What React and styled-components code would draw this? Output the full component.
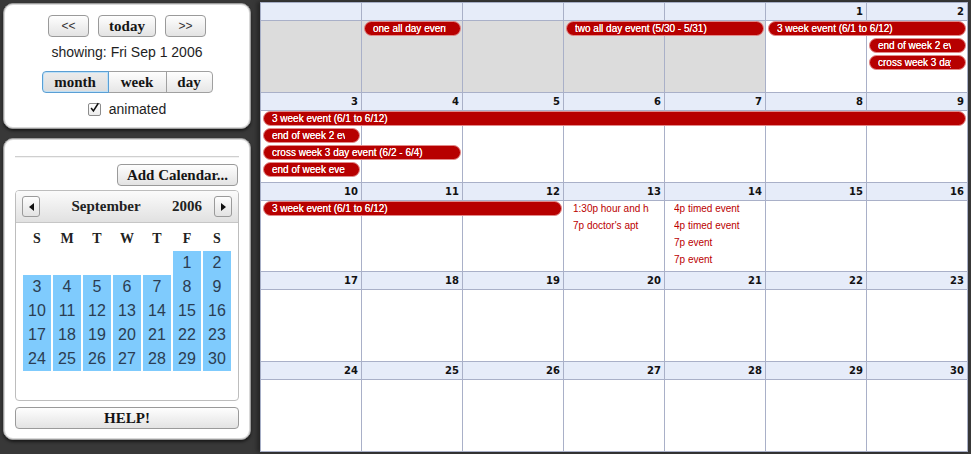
import styled, { createGlobalStyle } from "styled-components";

const GlobalStyle = createGlobalStyle`
  html, body {
    margin: 0;
    padding: 0;
  }
  body {
    background: #383838;
    font-family: "Liberation Sans", Arial, sans-serif;
  }
`;

const Page = styled.div`
  display: flex;
  gap: 9px;
  height: 454px;
  padding: 2px 3px;
  box-sizing: border-box;
`;

const Sidebar = styled.div`
  width: 248px;
  flex: none;
  display: flex;
  flex-direction: column;
  gap: 9px;
  padding-top: 1px;
`;

const Panel = styled.div`
  box-sizing: border-box;
  height: ${(p) => p.$height}px;
  background: #fff;
  border: 1px solid #9c9c9c;
  border-radius: 10px;
  box-shadow: inset 0 0 0 1px #d8d8d8, 0 2px 3px rgba(0, 0, 0, 0.55);
  display: flex;
  flex-direction: column;
`;

const ViewPanel = styled(Panel)`
  align-items: center;
  padding-top: 11px;
`;

const CalPanel = styled(Panel)`
  padding: 0 11px;
`;

const Button = styled.button`
  box-sizing: border-box;
  height: 22px;
  width: ${(p) => (p.$width ? `${p.$width}px` : "auto")};
  padding: 0;
  border: 1px solid #9a9a9a;
  border-radius: 4px;
  background: linear-gradient(#fefefe, #e3e3e3);
  font: bold 15px "Liberation Serif", "Times New Roman", serif;
  color: #151515;
  line-height: 20px;
`;

const ArrowText = styled(Button)`
  font: 12px "Liberation Sans", Arial, sans-serif;
  color: #333;
`;

const NavRow = styled.div`
  display: flex;
  gap: 9px;
`;

const Showing = styled.div`
  margin-top: 6px;
  font-size: 14px;
  line-height: 18px;
  color: #1e1e1e;
`;

const Switch = styled.div`
  display: flex;
  margin-top: 10px;
`;

const Segment = styled.button`
  box-sizing: border-box;
  height: 22px;
  width: ${(p) => p.$width}px;
  padding: 0;
  margin-left: -1px;
  border: 1px solid ${(p) => (p.$active ? "#5a9fd4" : "#a0a0a0")};
  position: relative;
  z-index: ${(p) => (p.$active ? 1 : 0)};
  border-radius: 0;
  background: ${(p) =>
    p.$active ? "linear-gradient(#ececec, #dcdcdc)" : "linear-gradient(#fefefe, #e6e6e6)"};
  box-shadow: ${(p) => (p.$active ? "inset 0 0 0 1px #bfe0f6" : "none")};
  font: bold 15px "Liberation Serif", "Times New Roman", serif;
  color: #151515;
  line-height: 20px;

  &:first-child {
    margin-left: 0;
    border-radius: 4px 0 0 4px;
  }
  &:last-child {
    border-radius: 0 4px 4px 0;
  }
`;

const CheckRow = styled.label`
  display: flex;
  align-items: center;
  gap: 8px;
  margin-top: 8px;
  font-size: 14px;
  line-height: 16px;
  color: #1e1e1e;
`;

const CheckBox = styled.span`
  box-sizing: border-box;
  width: 13px;
  height: 13px;
  border: 1px solid #8c8c8c;
  border-radius: 2px;
  background: linear-gradient(#fff, #ececec);
  display: flex;
  align-items: center;
  justify-content: center;
`;

const Divider = styled.div`
  margin-top: 17px;
  height: 1px;
  background: #cfcfcf;
  box-shadow: 0 1px 0 #f2f2f2;
`;

const AddRow = styled.div`
  display: flex;
  justify-content: flex-end;
  margin-top: 7px;
  padding-right: 1px;
`;

const MiniCal = styled.div`
  box-sizing: border-box;
  margin-top: 4px;
  height: 211px;
  border: 1px solid #bdbdbd;
  border-radius: 4px;
  overflow: hidden;
`;

const MiniHead = styled.div`
  display: flex;
  align-items: center;
  height: 32px;
  box-sizing: border-box;
  padding: 0 6px;
  background: linear-gradient(#fbfbfb, #e1e1e1);
  border-bottom: 1px solid #c6c6c6;
  font: bold 15px "Liberation Serif", "Times New Roman", serif;
  color: #222;
`;

const MonthName = styled.span`
  flex: 1;
  text-align: center;
`;

const YearName = styled.span`
  margin-right: 12px;
`;

const MiniArrow = styled.button`
  box-sizing: border-box;
  width: 18px;
  height: 21px;
  padding: 0;
  border: 1px solid #9a9a9a;
  border-radius: 3px;
  background: linear-gradient(#fefefe, #e2e2e2);
  display: flex;
  align-items: center;
  justify-content: center;
`;

const Triangle = styled.span`
  width: 0;
  height: 0;
  border-top: 4px solid transparent;
  border-bottom: 4px solid transparent;
  ${(p) => (p.$dir === "left" ? "border-right: 5px solid #111;" : "border-left: 5px solid #111;")}
`;

const MiniGrid = styled.div`
  display: grid;
  grid-template-columns: repeat(7, 28px);
  column-gap: 2px;
  padding: 0 7px;
`;

const DayNames = styled(MiniGrid)`
  margin-top: 8px;
  font: bold 14px "Liberation Serif", "Times New Roman", serif;
  line-height: 16px;
  color: #222;
  text-align: center;
`;

const MiniDays = styled(MiniGrid)`
  margin-top: 4px;
  grid-auto-rows: 24px;
`;

const MiniDay = styled.div`
  background: ${(p) => (p.$empty ? "transparent" : "#7fcbfd")};
  font-size: 16px;
  line-height: 24px;
  text-align: center;
  color: #2b3d52;
`;

const HelpButton = styled(Button)`
  margin-top: 6px;
  width: 100%;
`;

const Month = styled.div`
  flex: 1;
  display: grid;
  grid-template-rows: repeat(5, minmax(0, 1fr));
  background: #fff;
  border-top: 1px solid #a6aec6;
  border-left: 1px solid #a6aec6;
  box-shadow: -3px 0 4px rgba(0, 0, 0, 0.35);
`;

const Week = styled.div`
  display: grid;
  grid-template-columns: repeat(7, minmax(0, 1fr));
  grid-template-rows: 18px repeat(4, 17px) 1fr;
  min-height: 0;
`;

const DayHead = styled.div`
  grid-row: 1;
  grid-column: ${(p) => p.$col};
  box-sizing: border-box;
  background: #e6ecf9;
  border-right: 1px solid #a9b0c8;
  border-bottom: 1px solid #a9b0c8;
  padding-right: 3px;
  text-align: right;
  font: bold 10px "DejaVu Sans", Verdana, sans-serif;
  line-height: 17px;
  color: #111;
`;

const DayBody = styled.div`
  grid-row: 2 / -1;
  grid-column: ${(p) => p.$col};
  background: ${(p) => (p.$other ? "#dcdcdc" : "#fff")};
  border-right: 1px solid #a9b0c8;
  border-bottom: 1px solid #a9b0c8;
`;

const Bar = styled.div`
  grid-column: ${(p) => p.$col} / span ${(p) => p.$span};
  grid-row: ${(p) => p.$row + 2};
  z-index: 1;
  min-width: 0;
  box-sizing: border-box;
  height: 15px;
  margin: 0 2px;
  padding: 0 14px 0 8px;
  background: #b70000;
  border: 1px solid #e28a8a;
  border-radius: 8px;
  color: #fff;
  font: 10px "Liberation Sans", Arial, sans-serif;
  text-shadow: 0 0 0.4px #fff;
  line-height: 13px;
`;

const Clip = styled.span`
  display: block;
  white-space: nowrap;
  overflow: hidden;
`;

const Timed = styled.div`
  grid-column: ${(p) => p.$col};
  grid-row: ${(p) => p.$row + 2};
  z-index: 1;
  min-width: 0;
  padding: 0 16px 0 9px;
  color: #bb0000;
  font-size: 10px;
  line-height: 16px;
`;

const weeks = [
  {
    days: [null, null, null, null, null, 1, 2],
    bars: [
      { col: 2, span: 1, row: 0, title: "one all day event" },
      { col: 4, span: 2, row: 0, title: "two all day event (5/30 - 5/31)" },
      { col: 6, span: 2, row: 0, title: "3 week event (6/1 to 6/12)" },
      { col: 7, span: 1, row: 1, title: "end of week 2 event" },
      { col: 7, span: 1, row: 2, title: "cross week 3 day event (6/2 - 6/4)" },
    ],
    timed: [],
  },
  {
    days: [3, 4, 5, 6, 7, 8, 9],
    bars: [
      { col: 1, span: 7, row: 0, title: "3 week event (6/1 to 6/12)" },
      { col: 1, span: 1, row: 1, title: "end of week 2 event" },
      { col: 1, span: 2, row: 2, title: "cross week 3 day event (6/2 - 6/4)" },
      { col: 1, span: 1, row: 3, title: "end of week event" },
    ],
    timed: [],
  },
  {
    days: [10, 11, 12, 13, 14, 15, 16],
    bars: [{ col: 1, span: 3, row: 0, title: "3 week event (6/1 to 6/12)" }],
    timed: [
      { col: 4, row: 0, title: "1:30p hour and half" },
      { col: 4, row: 1, title: "7p doctor's apt" },
      { col: 5, row: 0, title: "4p timed event" },
      { col: 5, row: 1, title: "4p timed event" },
      { col: 5, row: 2, title: "7p event" },
      { col: 5, row: 3, title: "7p event" },
    ],
  },
  { days: [17, 18, 19, 20, 21, 22, 23], bars: [], timed: [] },
  { days: [24, 25, 26, 27, 28, 29, 30], bars: [], timed: [] },
];

const miniDays = [null, null, null, null, null, ...Array.from({ length: 30 }, (_, i) => i + 1)];

const CheckMark = () => (
  <svg width="13" height="13" viewBox="0 0 13 13" style={{ marginTop: -3 }}>
    <path d="M2.5 7 L5.2 10.5 L11 1.5" fill="none" stroke="#111" strokeWidth="1.8" />
  </svg>
);

const App = () => (
  <>
    <GlobalStyle />
    <Page>
      <Sidebar>
        <ViewPanel $height={126}>
          <NavRow>
            <ArrowText $width={41}>&lt;&lt;</ArrowText>
            <Button $width={58}>today</Button>
            <ArrowText $width={41}>&gt;&gt;</ArrowText>
          </NavRow>
          <Showing>showing: Fri Sep 1 2006</Showing>
          <Switch>
            <Segment $width={67} $active>
              month
            </Segment>
            <Segment $width={59}>week</Segment>
            <Segment $width={47}>day</Segment>
          </Switch>
          <CheckRow>
            <CheckBox>
              <CheckMark />
            </CheckBox>
            animated
          </CheckRow>
        </ViewPanel>

        <CalPanel $height={302}>
          <Divider />
          <AddRow>
            <Button $width={121}>Add Calendar...</Button>
          </AddRow>
          <MiniCal>
            <MiniHead>
              <MiniArrow>
                <Triangle $dir="left" />
              </MiniArrow>
              <MonthName>September</MonthName>
              <YearName>2006</YearName>
              <MiniArrow>
                <Triangle $dir="right" />
              </MiniArrow>
            </MiniHead>
            <DayNames>
              {["S", "M", "T", "W", "T", "F", "S"].map((d, i) => (
                <span key={i}>{d}</span>
              ))}
            </DayNames>
            <MiniDays>
              {miniDays.map((d, i) => (
                <MiniDay key={i} $empty={!d}>
                  {d}
                </MiniDay>
              ))}
            </MiniDays>
          </MiniCal>
          <HelpButton>HELP!</HelpButton>
        </CalPanel>
      </Sidebar>

      <Month>
        {weeks.map((week, w) => (
          <Week key={w}>
            {week.days.map((d, i) => (
              <DayHead key={`h${i}`} $col={i + 1}>
                {d}
              </DayHead>
            ))}
            {week.days.map((d, i) => (
              <DayBody key={`b${i}`} $col={i + 1} $other={!d} />
            ))}
            {week.bars.map((b, i) => (
              <Bar key={`e${i}`} $col={b.col} $span={b.span} $row={b.row}>
                <Clip>{b.title}</Clip>
              </Bar>
            ))}
            {week.timed.map((t, i) => (
              <Timed key={`t${i}`} $col={t.col} $row={t.row}>
                <Clip>{t.title}</Clip>
              </Timed>
            ))}
          </Week>
        ))}
      </Month>
    </Page>
  </>
);

export default App;
